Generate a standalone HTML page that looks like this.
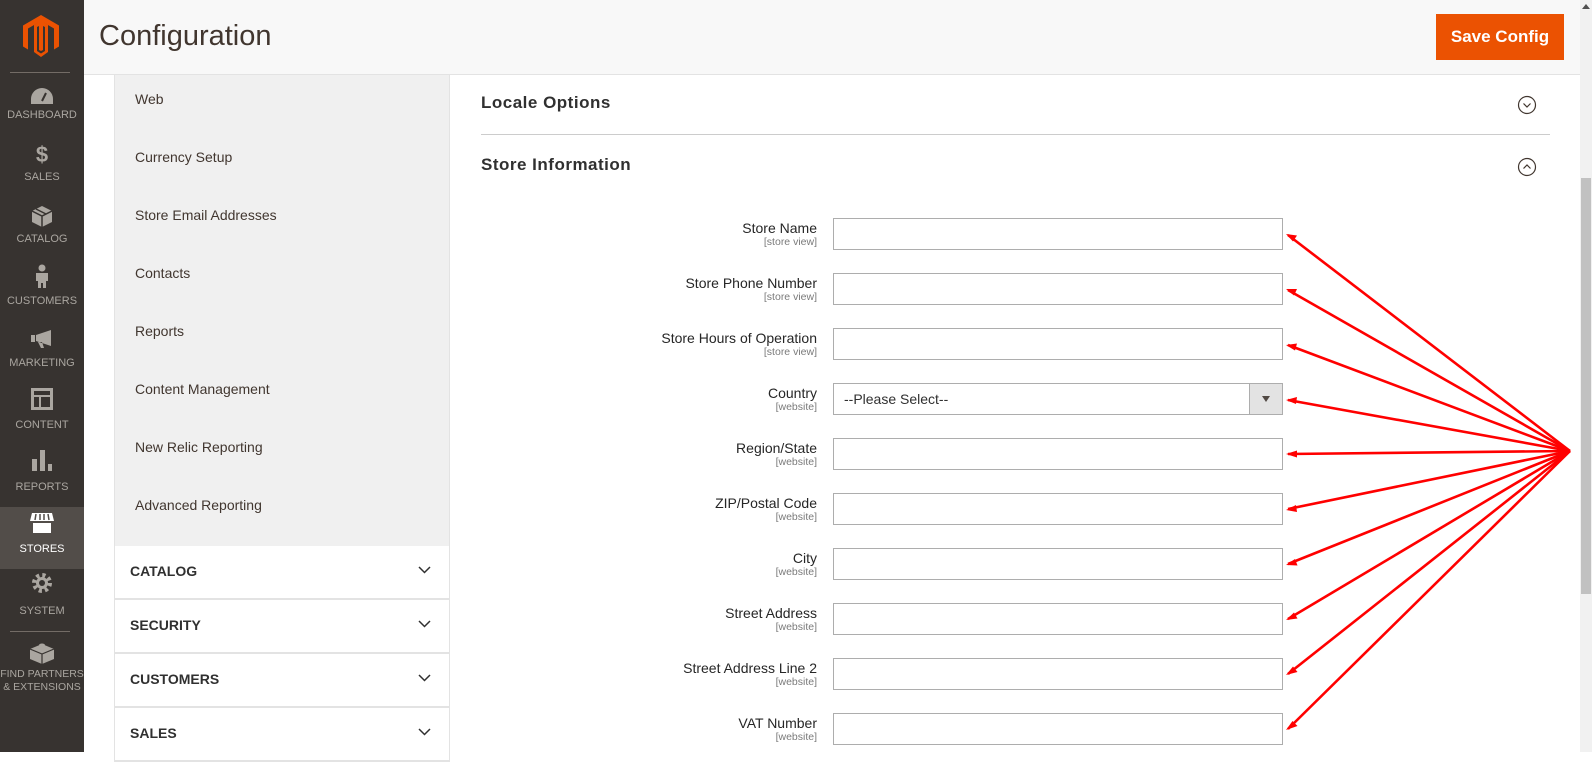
<!DOCTYPE html>
<html><head><meta charset="utf-8"><style>
*{box-sizing:border-box;margin:0;padding:0}
body{width:1592px;height:752px;overflow:hidden;background:#fff;font-family:"Liberation Sans",sans-serif;color:#303030;position:relative}
.sb{position:absolute;left:0;top:0;width:84px;height:752px;background:#373330}
.sb .it{position:absolute;left:0;width:84px;text-align:center;color:#aaa6a0;font-size:11px;line-height:13px;white-space:nowrap}
.sb .ic{position:absolute;left:0;width:84px;display:flex;justify-content:center}
.hd{position:absolute;left:84px;top:0;width:1496px;height:75px;background:#f8f8f8;border-bottom:1px solid #e3e3e3}
.hd h1{position:absolute;left:15px;top:20px;font-weight:normal;font-size:29px;color:#41362f}
.btn{position:absolute;left:1436px;top:14px;width:128px;height:46px;background:#eb5202;color:#fff;font-weight:bold;font-size:17px;text-align:center;line-height:46px}
.nav{position:absolute;left:114px;top:75px;width:336px;height:471px;background:#f0f0f0;border-left:1px solid #e3e3e3;border-right:1px solid #e3e3e3}
.nav div{position:absolute;left:20px;font-size:14px;color:#41362f}
.grp{position:absolute;left:114px;width:336px;height:54px;border:1px solid #e3e3e3;border-top:none;border-bottom:2px solid #e3e3e3;background:#fff}
.grp span{position:absolute;left:15px;top:17px;font-weight:bold;font-size:14px;color:#303030}
.grp svg{position:absolute;right:18px;top:20px}
.sec{position:absolute;left:481px;font-size:17px;letter-spacing:.5px;color:#303030;font-weight:bold}
.lbl{position:absolute;right:775px;text-align:right;font-size:14px;color:#262626;line-height:16px}
.lbl small{display:block;font-size:10.5px;color:#7a7a7a;line-height:13px}
.inp{position:absolute;left:833px;width:450px;height:32px;border:1px solid #adadad;background:#fff;font-size:14px}
.scr{position:absolute;left:1580px;top:0;width:12px;height:752px;background:#f1f1f1}
.thumb{position:absolute;left:1581px;top:178px;width:10px;height:416px;background:#c1c1c1}
</style></head><body>
<div class="sb">
<svg style="position:absolute;left:23px;top:15px" width="36" height="42" viewBox="0 0 36 42"><path d="M18 0L36 10.5V31.5L31 34.5V13.5L18 6L5 13.5V34.5L0 31.5V10.5Z M18 6L25 10V37L18 42L11 37V10L18 6Z M14 12V36L18 38.5L22 36V12L20 11V35L18 36L16 35V11Z" fill="#eb5202" fill-rule="evenodd"/></svg>
<div style="position:absolute;left:10px;top:72px;width:60px;height:1px;background:#736c66"></div>
<div class="ic" style="top:88px"><svg width="22" height="16" viewBox="0 0 22 16"><path d="M11 0A11 11 0 0 0 0 11V16H22V11A11 11 0 0 0 11 0Z" fill="#aaa6a0"/><path d="M11 13L15 5" stroke="#373330" stroke-width="2"/></svg></div>
<div class="it" style="top:109px">DASHBOARD</div>
<div class="ic" style="top:143px;color:#aaa6a0;font-weight:bold;font-size:22px;line-height:24px">$</div>
<div class="it" style="top:171px">SALES</div>
<div class="ic" style="top:206px"><svg width="20" height="21" viewBox="0 0 20 21"><path d="M10 0L20 5V16L10 21L0 16V5Z" fill="#aaa6a0"/><path d="M0 5L10 10L20 5M10 10V21M4 3L14 8" stroke="#373330" stroke-width="1.5" fill="none"/></svg></div>
<div class="it" style="top:233px">CATALOG</div>
<div class="ic" style="top:264px"><svg width="12" height="24" viewBox="0 0 12 24"><circle cx="6" cy="4" r="3.5" fill="#aaa6a0"/><path d="M0 9H12V17H10V24H7V19H5V24H2V17H0Z" fill="#aaa6a0"/></svg></div>
<div class="it" style="top:295px">CUSTOMERS</div>
<div class="ic" style="top:330px"><svg width="22" height="18" viewBox="0 0 22 18"><path d="M0 5H4V12H0Z M5 5L20 0V16L5 11Z M7 12L10 18H13L11 12Z" fill="#aaa6a0"/></svg></div>
<div class="it" style="top:357px">MARKETING</div>
<div class="ic" style="top:388px"><svg width="22" height="22" viewBox="0 0 22 22"><path d="M0 0H22V22H0Z M3 3V7H19V3Z M3 9V19H8V9Z M10 9V19H19V9Z" fill="#aaa6a0" fill-rule="evenodd"/></svg></div>
<div class="it" style="top:419px">CONTENT</div>
<div class="ic" style="top:450px"><svg width="20" height="21" viewBox="0 0 20 21"><path d="M0 9H5V21H0Z M8 0H13V21H8Z M16 14H20V21H16Z" fill="#aaa6a0"/></svg></div>
<div class="it" style="top:481px">REPORTS</div>
<div style="position:absolute;left:0;top:507px;width:84px;height:62px;background:#524d49"></div>
<div class="ic" style="top:513px"><svg width="24" height="20" viewBox="0 0 24 20"><path d="M2 0H22L24 8H0Z" fill="#fff"/><path d="M3 10H21V20H3Z" fill="#fff"/><path d="M6 1L5 7M10 1V7M14 1V7M18 1L19 7" stroke="#524d49" stroke-width="1.5"/></svg></div>
<div class="it" style="top:543px;color:#fff">STORES</div>
<div class="ic" style="top:572px"><svg width="22" height="22" viewBox="0 0 22 22"><circle cx="11" cy="11" r="7.5" fill="none" stroke="#aaa6a0" stroke-width="5" stroke-dasharray="3 2.9"/><circle cx="11" cy="11" r="6" fill="#aaa6a0"/><circle cx="11" cy="11" r="3" fill="#373330"/></svg></div>
<div class="it" style="top:605px">SYSTEM</div>
<div style="position:absolute;left:10px;top:631px;width:60px;height:1px;background:#736c66"></div>
<div class="ic" style="top:642px"><svg width="24" height="22" viewBox="0 0 24 22"><path d="M12 2L24 7V17L12 22L0 17V7Z" fill="#aaa6a0"/><path d="M0 7L12 12L24 7M12 12V22" stroke="#373330" stroke-width="1.2" fill="none"/><ellipse cx="12" cy="3" rx="3" ry="1.5" fill="#aaa6a0"/></svg></div>
<div class="it" style="top:668px;font-size:10.5px">FIND PARTNERS<br>&amp; EXTENSIONS</div>
</div>

<div class="hd"><h1>Configuration</h1></div>
<div class="btn">Save Config</div>

<div class="nav">
<div style="top:16px">Web</div>
<div style="top:74px">Currency Setup</div>
<div style="top:132px">Store Email Addresses</div>
<div style="top:190px">Contacts</div>
<div style="top:248px">Reports</div>
<div style="top:306px">Content Management</div>
<div style="top:364px">New Relic Reporting</div>
<div style="top:422px">Advanced Reporting</div>
</div>
<div class="grp" style="top:546px"><span>CATALOG</span><svg width="13" height="8" viewBox="0 0 13 8"><path d="M1 1L6.5 6.5L12 1" stroke="#303030" stroke-width="1.5" fill="none"/></svg></div>
<div class="grp" style="top:600px"><span>SECURITY</span><svg width="13" height="8" viewBox="0 0 13 8"><path d="M1 1L6.5 6.5L12 1" stroke="#303030" stroke-width="1.5" fill="none"/></svg></div>
<div class="grp" style="top:654px"><span>CUSTOMERS</span><svg width="13" height="8" viewBox="0 0 13 8"><path d="M1 1L6.5 6.5L12 1" stroke="#303030" stroke-width="1.5" fill="none"/></svg></div>
<div class="grp" style="top:708px"><span>SALES</span><svg width="13" height="8" viewBox="0 0 13 8"><path d="M1 1L6.5 6.5L12 1" stroke="#303030" stroke-width="1.5" fill="none"/></svg></div>

<div class="sec" style="top:93px">Locale Options</div>
<div style="position:absolute;left:481px;top:134px;width:1069px;height:1px;background:#cccccc"></div>
<div class="sec" style="top:155px">Store Information</div>
<svg style="position:absolute;left:1517px;top:95px" width="20" height="20" viewBox="0 0 20 20"><circle cx="10" cy="10" r="8.5" fill="none" stroke="#41362f" stroke-width="1.2"/><path d="M6.5 8.5L10 12L13.5 8.5" stroke="#41362f" stroke-width="1.2" fill="none"/></svg>
<svg style="position:absolute;left:1517px;top:157px" width="20" height="20" viewBox="0 0 20 20"><circle cx="10" cy="10" r="8.5" fill="none" stroke="#41362f" stroke-width="1.2"/><path d="M6.5 11.5L10 8L13.5 11.5" stroke="#41362f" stroke-width="1.2" fill="none"/></svg>

<div class="lbl" style="top:220px">Store Name<small>[store view]</small></div>
<div class="inp" style="top:218px"></div>
<div class="lbl" style="top:275px">Store Phone Number<small>[store view]</small></div>
<div class="inp" style="top:273px"></div>
<div class="lbl" style="top:330px">Store Hours of Operation<small>[store view]</small></div>
<div class="inp" style="top:328px"></div>
<div class="lbl" style="top:385px">Country<small>[website]</small></div>
<div class="inp" style="top:383px"><span style="position:absolute;left:10px;top:7px;color:#303030">--Please Select--</span><div style="position:absolute;right:0;top:0;width:33px;height:30px;background:#e3e3e3;border-left:1px solid #adadad"><svg style="position:absolute;left:12px;top:12px" width="8" height="6"><path d="M0 0H8L4 6Z" fill="#514943"/></svg></div></div>
<div class="lbl" style="top:440px">Region/State<small>[website]</small></div>
<div class="inp" style="top:438px"></div>
<div class="lbl" style="top:495px">ZIP/Postal Code<small>[website]</small></div>
<div class="inp" style="top:493px"></div>
<div class="lbl" style="top:550px">City<small>[website]</small></div>
<div class="inp" style="top:548px"></div>
<div class="lbl" style="top:605px">Street Address<small>[website]</small></div>
<div class="inp" style="top:603px"></div>
<div class="lbl" style="top:660px">Street Address Line 2<small>[website]</small></div>
<div class="inp" style="top:658px"></div>
<div class="lbl" style="top:715px">VAT Number<small>[website]</small></div>
<div class="inp" style="top:713px"></div>

<svg style="position:absolute;left:0;top:0" width="1592" height="752">
<g stroke="#f00" stroke-width="2.6" fill="none">
<line x1="1570" y1="451" x2="1288" y2="235"/>
<line x1="1570" y1="451" x2="1288" y2="290"/>
<line x1="1570" y1="451" x2="1288" y2="345"/>
<line x1="1570" y1="451" x2="1288" y2="400"/>
<line x1="1570" y1="451" x2="1288" y2="454"/>
<line x1="1570" y1="451" x2="1288" y2="509"/>
<line x1="1570" y1="451" x2="1288" y2="564"/>
<line x1="1570" y1="451" x2="1288" y2="619"/>
<line x1="1570" y1="451" x2="1288" y2="674"/>
<line x1="1570" y1="451" x2="1288" y2="729"/>
</g>
<g fill="#f00">
<path d="M1286 234l11 1.5-4 6z"/>
<path d="M1286 289l11 0-3 6.5z"/>
<path d="M1286 345l11-1.5-2 7z"/>
<path d="M1286 400l11-3-1 7z"/>
<path d="M1286 454l11-3.5 0 7z"/>
<path d="M1286 510l10-5 1 7z"/>
<path d="M1286 565l9-6 2.5 6.5z"/>
<path d="M1286 620l8-7.5 3.5 6z"/>
<path d="M1286 675l7-8.5 4.5 5.5z"/>
<path d="M1286 730l6.5-9 5 5z"/>
</g>
</svg>

<div class="scr"></div>
<div class="thumb"></div>
<svg style="position:absolute;left:1582px;top:4px" width="8" height="5"><path d="M0 5L4 0L8 5Z" fill="#505050"/></svg>
</body></html>
